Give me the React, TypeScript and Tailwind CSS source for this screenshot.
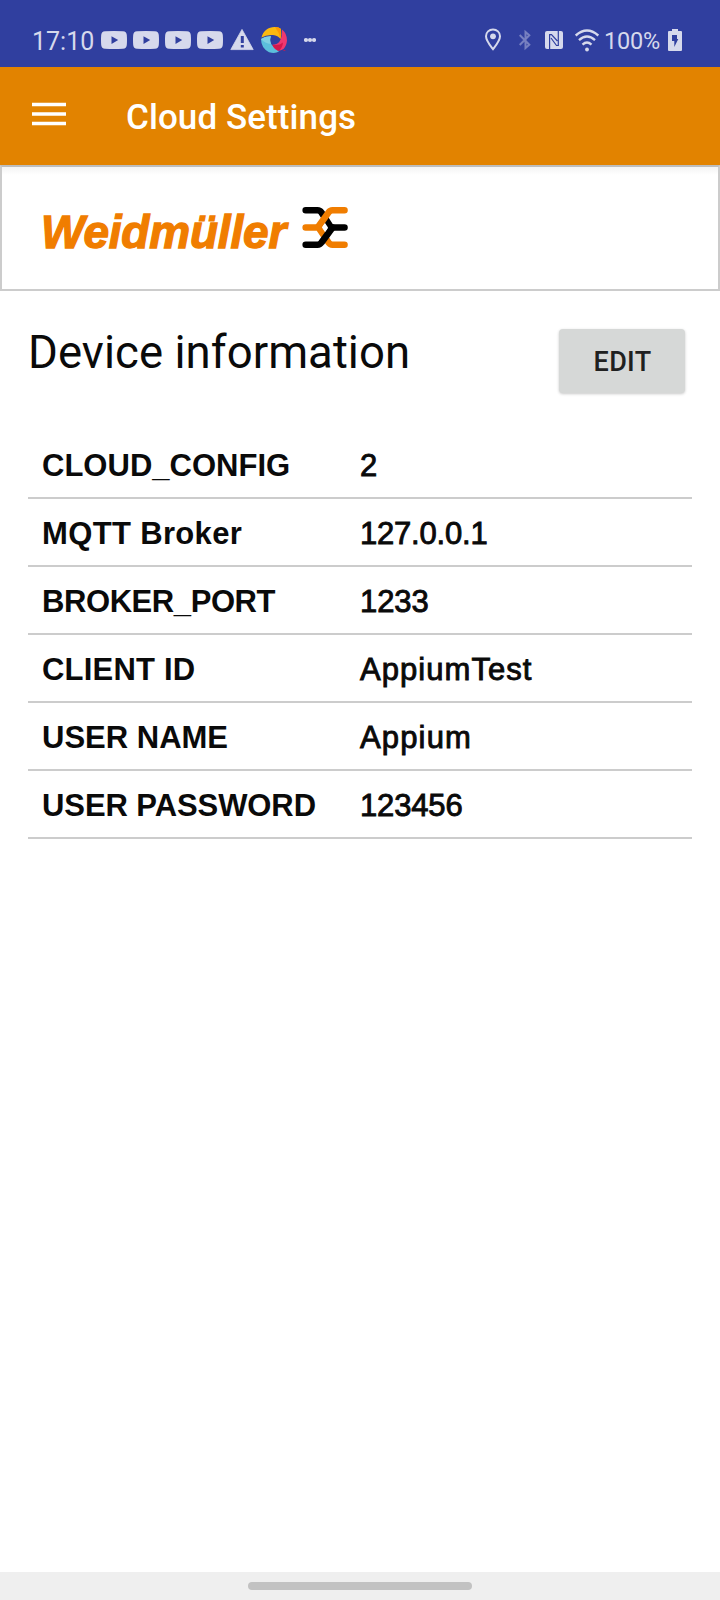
import React from "react";

const ROWS: { label: string; value: string; labelSpacing: string; valueSpacing: string }[] = [
  { label: "CLOUD_CONFIG", value: "2", labelSpacing: "tracking-[0.020px]", valueSpacing: "" },
  { label: "MQTT Broker", value: "127.0.0.1", labelSpacing: "tracking-[0.350px]", valueSpacing: "tracking-[-0.200px]" },
  { label: "BROKER_PORT", value: "1233", labelSpacing: "tracking-[-0.420px]", valueSpacing: "tracking-[-0.100px]" },
  { label: "CLIENT ID", value: "AppiumTest", labelSpacing: "tracking-[0.200px]", valueSpacing: "tracking-[1.050px]" },
  { label: "USER NAME", value: "Appium", labelSpacing: "", valueSpacing: "tracking-[1.150px]" },
  { label: "USER PASSWORD", value: "123456", labelSpacing: "tracking-[-0.080px]", valueSpacing: "tracking-[-0.150px]" },
];

function VideoIcon() {
  return (
    <svg className="mr-[6px] h-[28px] w-[26px] shrink-0" viewBox="0 0 26 28">
      <path
        fillRule="evenodd"
        fill="#d6d9ec"
        d="M4 5.2Q13 4.6 22 5.2Q25.5 5.4 25.8 9Q26.2 14 25.8 19Q25.5 22.6 22 22.8Q13 23.4 4 22.8Q.5 22.6.2 19Q-.2 14 .2 9Q.5 5.4 4 5.2ZM10.500 10.300V18L17.200 14Z"
      />
    </svg>
  );
}

function WarningIcon() {
  return (
    <svg className="ml-[1px] h-[28px] w-[24px] shrink-0" viewBox="0 0 24 28">
      <path
        fill="#d6d9ec"
        stroke="#d6d9ec"
        strokeWidth=".8"
        strokeLinejoin="round"
        d="M12 3.4L23.2 23.6H.8Z"
      />
      <path fill="#303f9f" d="M10.800 10h3v7h-3zM10.800 19h3v2.600h-3z" />
    </svg>
  );
}

function SwirlIcon() {
  return (
    <svg className="ml-[7px] h-[28px] w-[26px] shrink-0" viewBox="0 0 26 28">
      <path fill="#5cbfdc" d="M0 13Q4 10 10 10.300Q8 16 11.500 19.500Q14 23.500 18 25.500Q14 28 8 26.200Q0 22 0 13Z" />
      <path fill="#7fcfe2" d="M0 13Q4 10 10 10.300Q8 14 10 18Q4 17.500 0 13Z" />
      <path fill="#fbb90f" d="M0.500 11.500C2 4.500 8 .7 14 1Q18 1.200 20 3Q20.500 9 19.500 13Q17 9.500 12 9Q5 8.500 .5 11.500Z" />
      <path fill="#ff9a00" d="M14 1Q18 1.200 20 3Q20.500 9 19.500 13Q18.500 7 14 1Z" />
      <path fill="#f0386f" d="M21 3.500Q26 7.500 26 14.500Q25.500 20 22.500 23Q20 24.800 17 24.800Q12 22.500 11.500 18.800Q16 18.800 18.500 15.500Q21.500 11 21 3.500Z" />
      <path fill="#d3174c" d="M11.500 18.800Q18 20 22 16.500Q21.500 22 18 24.800Q12.500 23 11.500 18.800ZM21.500 24.500L24.500 24L24 25Z" />
    </svg>
  );
}

function MoreDots() {
  return (
    <svg className="ml-[17px] h-[28px] w-[12px] shrink-0" viewBox="0 0 12 28" fill="#d6d9ec">
      <circle cx="2" cy="14" r="2.100" />
      <circle cx="6" cy="14" r="2.100" />
      <circle cx="10" cy="14" r="2.100" />
    </svg>
  );
}

function PinIcon() {
  return (
    <svg className="h-[28px] w-[16px] shrink-0" viewBox="0 0 16 28">
      <path
        fill="none"
        stroke="#d6d9ec"
        strokeWidth="2"
        d="M8 23.200C5 19.200 1 14.500 1 10.200A7 6.800 0 0 1 15 10.200C15 14.500 11 19.200 8 23.200Z"
      />
      <circle cx="8" cy="10.300" r="2.900" fill="#d6d9ec" />
    </svg>
  );
}

function BluetoothIcon() {
  return (
    <svg className="ml-[18px] h-[28px] w-[12px] shrink-0" viewBox="0 0 12 28">
      <path
        fill="none"
        stroke="#7780c0"
        strokeWidth="2"
        d="M.7 9L10.300 18.700L6.500 22V6L10.300 9.300L.7 19"
      />
    </svg>
  );
}

function NfcIcon() {
  return (
    <svg className="ml-[14px] h-[28px] w-[18px] shrink-0" viewBox="0 0 18 28">
      <rect x="0" y="5" width="18" height="18" rx="2" fill="#d6d9ec" />
      <path fill="none" stroke="#303f9f" strokeWidth="1.200" d="M4.600 8.300V23M4.200 8.700H6.500L12.400 15M13.300 20V5M6 12L11.500 19.500H13.800" />
    </svg>
  );
}

function WifiIcon() {
  return (
    <svg className="ml-[12px] h-[28px] w-[24px] shrink-0" viewBox="0 0 24 28">
      <g fill="none" stroke="#d6d9ec" strokeWidth="2.400">
        <path d="M.7 9.500Q12 -.4 23.300 9.500" />
        <path d="M4 14.200Q12 7 20 14.200" />
        <path d="M7.500 18.600Q12 14.600 16.500 18.600" />
      </g>
      <circle cx="12" cy="23.500" r="1.900" fill="#d6d9ec" />
    </svg>
  );
}

function BatteryIcon() {
  return (
    <svg className="h-[28px] w-[14px] shrink-0" viewBox="0 0 14 28">
      <path fill="#d6d9ec" d="M4 3H10V5H13Q14 5 14 6V24Q14 25 13 25H1Q0 25 0 24V6Q0 5 1 5H4Z" />
      <path fill="#303f9f" d="M4 9H9V13H10.300L6.300 21V15H4Z" />
    </svg>
  );
}

function StatusBar() {
  return (
    <div className="flex h-[67px] items-center bg-[#303f9f] pt-[13px] font-[Roboto,sans-serif] text-[#d6d9ec]">
      <div className="ml-[32px] w-[69px] pt-[3px] text-[25px] leading-none whitespace-nowrap">17:10</div>
      <VideoIcon />
      <VideoIcon />
      <VideoIcon />
      <VideoIcon />
      <WarningIcon />
      <SwirlIcon />
      <MoreDots />
      <div className="flex-1" />
      <PinIcon />
      <BluetoothIcon />
      <NfcIcon />
      <WifiIcon />
      <div className="ml-[5px] w-[64px] pt-[4px] text-[23.500px] leading-none tracking-[-0.200px] whitespace-nowrap">
        100%
      </div>
      <BatteryIcon />
      <div className="w-[38px] shrink-0" />
    </div>
  );
}

function AppBar() {
  return (
    <header className="flex h-[98px] items-center bg-[#e28300]">
      <button className="ml-[32px] w-[34px]" aria-label="Menu">
        <svg className="mb-[5px] block h-[24px] w-[34px]" viewBox="0 0 34 24" fill="#fff">
          <path d="M0 .8H34V4.200H0ZM0 10.300H34V13.700H0ZM0 19.800H34V23.200H0Z" />
        </svg>
      </button>
      <h1 className="ml-[60px] pt-[2px] font-[Roboto,sans-serif] text-[35px] leading-none font-medium tracking-[0.080px] text-white">
        Cloud Settings
      </h1>
    </header>
  );
}

function Brand() {
  return (
    <div className="h-[126px] border-2 border-[#cccccc] border-t-[#bdbdbd] bg-white">
      <div className="flex h-full items-center bg-linear-to-b from-[#f3f3f3] to-white to-[8px] pl-[39px]">
        <span className="w-[259px] pt-[7px] font-['Liberation_Sans',sans-serif] text-[46px] leading-none font-bold tracking-[-0.200px] whitespace-nowrap text-[#f07d00] italic [-webkit-text-stroke:1.300px_#f07d00]">
          Weidmüller
        </span>
        <svg className="mb-[3px] h-[42px] w-[48px] shrink-0" viewBox="300 206 48 42">
          <g fill="none" strokeWidth="6.600" strokeLinecap="round" strokeLinejoin="round">
            <path stroke="#000" d="M305.700 210.300H317.500Q320 210.300 321.500 212.500L331 227.500H344.500" />
            <path stroke="#f07d00" d="M305.700 227.500H318.500L328.500 242.500Q330 244.700 332.500 244.700H344.500" />
            <path stroke="#000" d="M305.700 244.700H317.500Q320 244.700 321.500 242.500L332.500 227.500" />
            <path stroke="#f07d00" d="M344.500 210.300H332.500Q330 210.300 328.500 212.500L318.500 226.500" />
          </g>
          <path fill="#fff" d="M325 223L328 227.500L325 232L322 227.500Z" />
        </svg>
      </div>
    </div>
  );
}

export default function App() {
  return (
    <div className="flex h-[1600px] w-[720px] flex-col overflow-hidden bg-white">
      <StatusBar />
      <AppBar />
      <Brand />
      <main className="flex-1 px-[28px] pt-[38px]">
        <div className="flex h-[102px] items-start justify-between pr-[7px]">
          <h2 className="font-[Roboto,sans-serif] text-[45.500px] leading-[48px] tracking-[0.060px] whitespace-nowrap text-[#0a0a0a]">
            Device information
          </h2>
          <button className="h-[64px] w-[126px] rounded-[4px] bg-[#d6d8d7] pt-[2px] pl-[1px] font-[Roboto,sans-serif] text-[27px] font-medium tracking-[0.300px] text-[#202020] shadow-[0_1px_3px_rgba(0,0,0,0.22)]">
            EDIT
          </button>
        </div>
        <dl className="font-['Liberation_Sans',sans-serif] text-[31px] leading-[66px] text-[#0a0a0a]">
          {ROWS.map((row) => (
            <div key={row.label} className="flex h-[68px] border-b-2 border-[#cccccc] pt-[2px] pl-[14px]">
              <dt className={`w-[318px] font-bold whitespace-nowrap ${row.labelSpacing}`}>{row.label}</dt>
              <dd className={`whitespace-nowrap [-webkit-text-stroke:0.900px_#0a0a0a] ${row.valueSpacing}`}>{row.value}</dd>
            </div>
          ))}
        </dl>
      </main>
      <footer className="flex h-[28px] items-center justify-center bg-[#efefef]">
        <div className="h-[8px] w-[224px] rounded-full bg-[#c2c2c2]" />
      </footer>
    </div>
  );
}
